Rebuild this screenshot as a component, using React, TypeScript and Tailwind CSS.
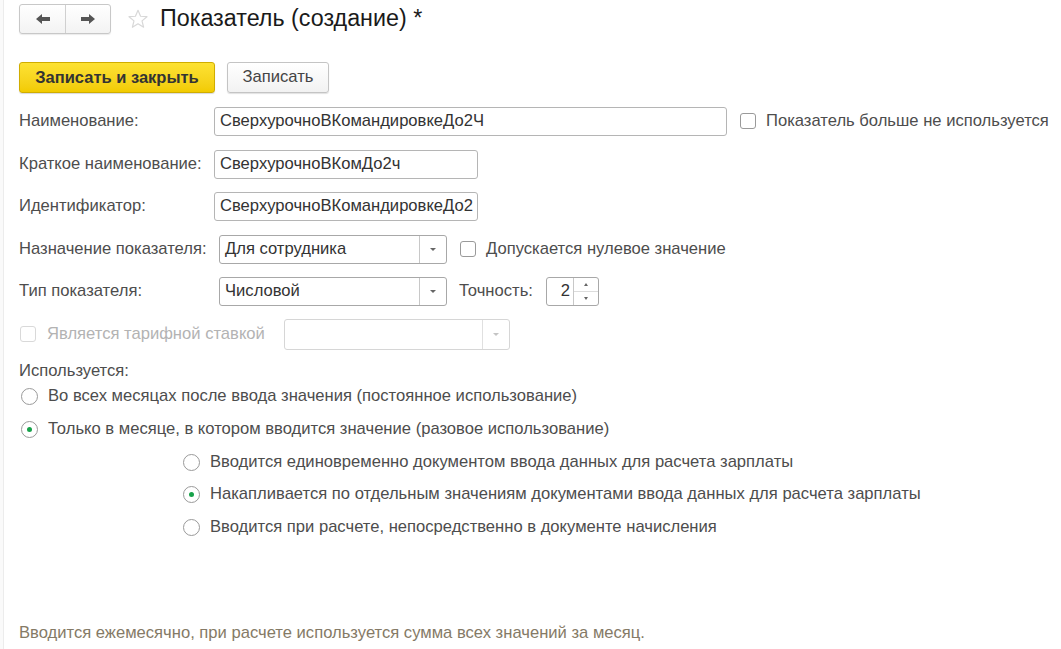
import React from 'react';

const font = { fontFamily: '"Liberation Sans", Arial, sans-serif' };

function TextInput({ value, width }: { value: string; width: string }) {
  return (
    <div
      className={`${width} h-[29px] border border-[#b5b5b5] rounded-[3px] bg-white flex items-center px-[5px] text-[16.6px] text-[#333] overflow-hidden whitespace-nowrap`}
    >
      {value}
    </div>
  );
}

function Select({ value, disabled }: { value?: string; disabled?: boolean }) {
  return (
    <div
      className={`h-[29px] border rounded-[3px] bg-white flex text-[16.6px] text-[#333] ${
        disabled ? 'border-[#d6d6d6] w-[226px] h-[31px]' : 'border-[#a8a8a8] w-[228px]'
      }`}
    >
      <div className="flex-1 flex items-center px-[5px] whitespace-nowrap">{value}</div>
      <div className={`w-[27px] border-l flex items-center justify-center ${disabled ? 'border-[#e0e0e0]' : 'border-[#c8c8c8]'}`}>
        <div className={`w-0 h-0 border-l-[3px] border-r-[3px] border-t-[3px] border-l-transparent border-r-transparent ${disabled ? 'border-t-[#c4c4c4]' : 'border-t-[#666]'}`} />
      </div>
    </div>
  );
}

function Checkbox({ disabled }: { disabled?: boolean }) {
  return (
    <div
      className={`w-[16px] h-[16px] rounded-[3px] border bg-white shrink-0 ${disabled ? 'border-[#d9d9d9]' : 'border-[#9a9a9a]'}`}
    />
  );
}

function Radio({ checked, label }: { checked?: boolean; label: string }) {
  return (
    <div className="flex items-center gap-[10px] h-[20px]">
      <div className="w-[17px] h-[17px] rounded-full border border-[#9a9a9a] bg-white flex items-center justify-center shrink-0">
        {checked && <div className="w-[5px] h-[5px] rounded-full bg-[#17a24a]" />}
      </div>
      <span className="text-[16.6px] text-[#4d4d4d] whitespace-nowrap">{label}</span>
    </div>
  );
}

function Label({ text, width = 'w-[195px]' }: { text: string; width?: string }) {
  return <div className={`${width} shrink-0 text-[16.6px] text-[#4d4d4d] whitespace-nowrap`}>{text}</div>;
}

export default function App() {
  return (
    <div className="w-[1061px] h-[649px] bg-white flex overflow-hidden" style={font}>
      <div className="w-[4px] border-r border-[#ececec] bg-[#fafafa]" />
      <div className="flex-1 pl-[15px] flex flex-col">
        {/* header */}
        <div className="flex items-center h-[30px] mt-[4px]">
          <div className="flex h-[30px] w-[92px] border border-[#c8c8c8] rounded-[3px] bg-gradient-to-b from-white to-[#f3f3f3] shadow-[0_1px_1px_rgba(0,0,0,0.08)]">
            <div className="w-[46px] flex items-center justify-center border-r border-[#d0d0d0]">
              <svg width="16" height="12" viewBox="0 0 16 12">
                <path d="M1 6 L7 1 L7 4 L15 4 L15 8 L7 8 L7 11 Z" fill="#555" />
              </svg>
            </div>
            <div className="flex-1 flex items-center justify-center">
              <svg width="16" height="12" viewBox="0 0 16 12">
                <path d="M15 6 L9 1 L9 4 L1 4 L1 8 L9 8 L9 11 Z" fill="#555" />
              </svg>
            </div>
          </div>
          <svg className="ml-[16px]" width="22" height="22" viewBox="0 0 24 24">
            <path
              d="M12 2.5 L14.8 9 L21.8 9.5 L16.4 14 L18.1 21 L12 17.2 L5.9 21 L7.6 14 L2.2 9.5 L9.2 9 Z"
              fill="none"
              stroke="#d8d8d8"
              strokeWidth="1.3"
              strokeLinejoin="round"
            />
          </svg>
          <div className="ml-[11px] text-[23.3px] text-[#1a1a1a] whitespace-nowrap leading-none">Показатель (создание) *</div>
        </div>

        {/* buttons */}
        <div className="flex gap-[12px] mt-[28px]">
          <div className="w-[196px] h-[31px] rounded-[3px] border border-[#d0ad00] bg-gradient-to-b from-[#fde232] to-[#f2cb00] flex items-center justify-center text-[16.5px] font-bold text-[#333] shadow-[0_1px_1px_rgba(0,0,0,0.15)]">
            Записать и закрыть
          </div>
          <div className="w-[102px] h-[31px] rounded-[3px] border border-[#c4c4c4] bg-gradient-to-b from-white to-[#f2f2f2] flex items-center justify-center text-[16.6px] text-[#444] shadow-[0_1px_1px_rgba(0,0,0,0.12)]">
            Записать
          </div>
        </div>

        {/* fields */}
        <div className="flex flex-col gap-[13.5px] mt-[14px]">
          <div className="flex items-center h-[29px]">
            <Label text="Наименование:" />
            <TextInput value="СверхурочноВКомандировкеДо2Ч" width="w-[513px]" />
            <div className="ml-[13px] flex items-center gap-[10px]">
              <Checkbox />
              <span className="text-[16.6px] text-[#4d4d4d] whitespace-nowrap">Показатель больше не используется</span>
            </div>
          </div>
          <div className="flex items-center h-[29px]">
            <Label text="Краткое наименование:" />
            <TextInput value="СверхурочноВКомДо2ч" width="w-[264px]" />
          </div>
          <div className="flex items-center h-[29px]">
            <Label text="Идентификатор:" />
            <TextInput value="СверхурочноВКомандировкеДо2" width="w-[264px]" />
          </div>
          <div className="flex items-center h-[29px]">
            <Label text="Назначение показателя:" width="w-[200px]" />
            <Select value="Для сотрудника" />
            <div className="ml-[13px] flex items-center gap-[10px]">
              <Checkbox />
              <span className="text-[16.6px] text-[#4d4d4d] whitespace-nowrap">Допускается нулевое значение</span>
            </div>
          </div>
          <div className="flex items-center h-[29px]">
            <Label text="Тип показателя:" width="w-[200px]" />
            <Select value="Числовой" />
            <span className="ml-[12px] text-[16.6px] text-[#4d4d4d] whitespace-nowrap">Точность:</span>
            <div className="ml-[13px] w-[53px] h-[29px] border border-[#a8a8a8] rounded-[3px] bg-white flex">
              <div className="flex-1 flex items-center justify-end pr-[3px] text-[16.6px] text-[#333]">2</div>
              <div className="w-[25px] border-l border-[#c8c8c8] flex flex-col">
                <div className="flex-1 flex items-center justify-center border-b border-[#dcdcdc]">
                  <div className="w-0 h-0 border-l-[2px] border-r-[2px] border-b-[3px] border-l-transparent border-r-transparent border-b-[#666]" />
                </div>
                <div className="flex-1 flex items-center justify-center">
                  <div className="w-0 h-0 border-l-[2px] border-r-[2px] border-t-[3px] border-l-transparent border-r-transparent border-t-[#666]" />
                </div>
              </div>
            </div>
          </div>
          <div className="flex items-center h-[30px]">
            <div className="w-[265px] shrink-0 flex items-center gap-[11px] pl-[1px]">
              <Checkbox disabled />
              <span className="text-[16.6px] text-[#b3b3b3] whitespace-nowrap">Является тарифной ставкой</span>
            </div>
            <Select disabled />
          </div>
        </div>

        {/* usage */}
        <div className="mt-[9px] text-[16.6px] text-[#4d4d4d]">Используется:</div>
        <div className="flex flex-col gap-[13px] mt-[3px] pl-[2px]">
          <Radio label="Во всех месяцах после ввода значения (постоянное использование)" />
          <Radio checked label="Только в месяце, в котором вводится значение (разовое использование)" />
        </div>
        <div className="flex flex-col gap-[12.5px] mt-[13px] pl-[164px]">
          <Radio label="Вводится единовременно документом ввода данных для расчета зарплаты" />
          <Radio checked label="Накапливается по отдельным значениям документами ввода данных для расчета зарплаты" />
          <Radio label="Вводится при расчете, непосредственно в документе начисления" />
        </div>

        <div className="mt-auto mb-[3px] text-[16.6px] text-[#857a66] whitespace-nowrap">
          Вводится ежемесячно, при расчете используется сумма всех значений за месяц.
        </div>
      </div>
    </div>
  );
}
